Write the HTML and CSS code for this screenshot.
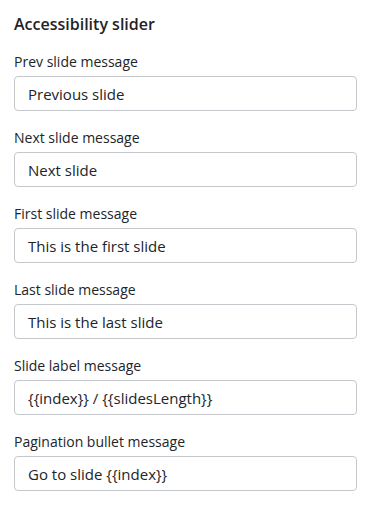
FILE: index.html
```html
<!DOCTYPE html>
<html>
<head>
<meta charset="utf-8">
<link rel="stylesheet" href="styles.css">
</head>
<body>
<div class="panel">
  <h3 class="title">Accessibility slider</h3>
  <div class="field">
    <label class="label">Prev slide message</label>
    <div class="input">Previous slide</div>
  </div>
  <div class="field">
    <label class="label">Next slide message</label>
    <div class="input">Next slide</div>
  </div>
  <div class="field">
    <label class="label">First slide message</label>
    <div class="input">This is the first slide</div>
  </div>
  <div class="field">
    <label class="label">Last slide message</label>
    <div class="input">This is the last slide</div>
  </div>
  <div class="field">
    <label class="label">Slide label message</label>
    <div class="input">{{index}} / {{slidesLength}}</div>
  </div>
  <div class="field">
    <label class="label">Pagination bullet message</label>
    <div class="input">Go to slide {{index}}</div>
  </div>
</div>
</body>
</html>
```
FILE: styles.css
```css
html, body {
  margin: 0;
  background: #fff;
}
body {
  font-family: "Open Sans", "Noto Sans", sans-serif;
  color: #212529;
}
.panel {
  padding: 13px 11px 0 14px;
  display: flex;
  flex-direction: column;
}
.title {
  margin: 0 0 17px;
  font-size: 16px;
  font-weight: 600;
  line-height: 22px;
  color: #1f2328;
}
.field {
  display: flex;
  flex-direction: column;
  margin-bottom: 17px;
}
.label {
  font-size: 14px;
  line-height: 20px;
  margin-bottom: 4px;
  color: #212529;
}
.input {
  height: 35px;
  box-sizing: border-box;
  border: 1px solid #c4c8cc;
  border-radius: 4px;
  padding: 0 13px;
  display: flex;
  align-items: center;
  font-size: 15px;
  color: #212529;
}
```
